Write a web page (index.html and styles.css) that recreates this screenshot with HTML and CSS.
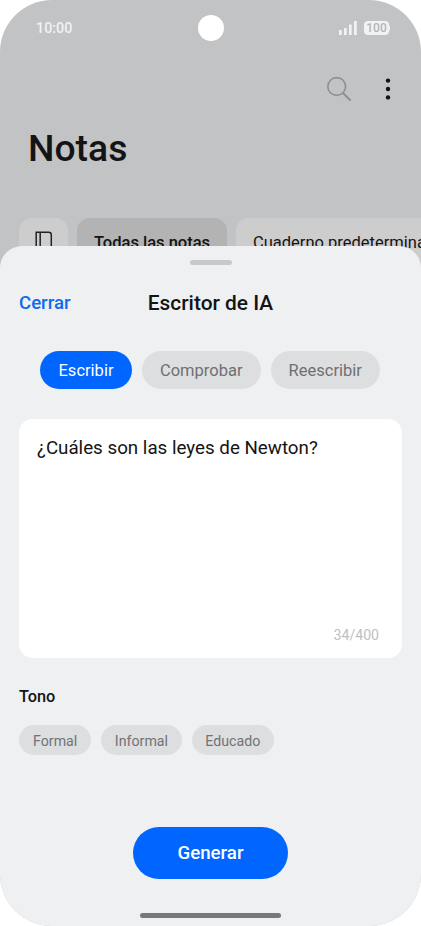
FILE: index.html
```html
<!DOCTYPE html>
<html lang="es">
<head>
<meta charset="utf-8">
<title>Notas</title>
<link rel="stylesheet" href="styles.css">
</head>
<body>
<main class="phone">
  <section class="notes">
    <header class="status">
      <span class="time">10:00</span>
      <span class="camera"></span>
      <span class="indicators">
        <svg class="signal" width="18" height="14" viewBox="0 0 18 14"><path d="M0 9h2.7v5H0zM5 7h2.7v7H5zM10 3.5h2.7V14H10zM15 0h2.7v14H15z"/></svg>
        <span class="battery">100</span>
      </span>
    </header>
    <div class="actions">
      <svg width="26" height="26" viewBox="0 0 26 26" fill="none" stroke="#8d8f90" stroke-linecap="round"><circle cx="10.7" cy="10.5" r="8.9" stroke-width="1.6"/><path d="M17.2 17.2L24 24" stroke-width="2"/></svg>
      <svg width="6" height="22" viewBox="0 0 6 22" fill="#111"><circle cx="3" cy="2.6" r="2.2"/><circle cx="3" cy="11" r="2.2"/><circle cx="3" cy="19.4" r="2.2"/></svg>
    </div>
    <h1 class="title">Notas</h1>
    <nav class="folders">
      <span class="folder folder-icon"><svg width="18" height="22" viewBox="0 0 18 22" fill="none" stroke="#222" stroke-width="1.5"><path d="M1.2 1.2h12.5a2.6 2.6 0 0 1 2.6 2.6V21H1.2zM5.2 1.2V21"/></svg></span>
      <span class="folder folder-active">Todas las notas</span>
      <span class="folder folder-default">Cuaderno predeterminado</span>
    </nav>
  </section>
  <section class="sheet">
    <span class="grabber"></span>
    <header class="sheet-head">
      <span class="close">Cerrar</span>
      <h2 class="sheet-title">Escritor de IA</h2>
    </header>
    <div class="modes">
      <span class="mode mode-write">Escribir</span>
      <span class="mode mode-check">Comprobar</span>
      <span class="mode mode-rewrite">Reescribir</span>
    </div>
    <div class="prompt">
      <p class="prompt-text">¿Cuáles son las leyes de Newton?</p>
      <span class="counter">34/400</span>
    </div>
    <h3 class="tone-title">Tono</h3>
    <div class="tones">
      <span class="tone tone-formal">Formal</span>
      <span class="tone tone-informal">Informal</span>
      <span class="tone tone-polite">Educado</span>
    </div>
    <div class="generate">Generar</div>
    <span class="home"></span>
  </section>
</main>
</body>
</html>
```

FILE: styles.css
```css
* { box-sizing: border-box; margin: 0; padding: 0; }
body { background: #fff; font-family: Roboto, sans-serif; color: #141414; overflow: hidden; }
.phone { width: 421px; height: 926px; border-radius: 52px; overflow: hidden; background: #c1c3c5; }
.notes { height: 270px; overflow: hidden; }
.status { height: 56px; padding: 0 31px 0 36px; display: grid; grid-template-columns: 1fr 26px 1fr; align-items: center; }
.time { font-size: 14.3px; font-weight: 500; color: #f1f2f2; }
.camera { width: 26px; height: 26px; border-radius: 50%; background: #fff; margin-left: -2px; }
.indicators { display: flex; justify-content: flex-end; align-items: center; gap: 6px; }
.signal { fill: #f1f2f2; margin-right: 1px; }
.battery { position: relative; width: 25px; height: 13.5px; margin-right: 1px; border-radius: 4px; background: #f1f2f2; color: #b3b5b7; font-size: 12px; line-height: 14px; font-weight: 500; text-align: center; }
.battery::after { content: ""; position: absolute; right: -1px; top: 4px; width: 2px; height: 6px; border-radius: 0 2px 2px 0; background: #f1f2f2; }
.actions { height: 44px; margin-top: 11px; padding-right: 30px; display: flex; justify-content: flex-end; align-items: center; gap: 33px; }
.title { font-size: 37.3px; font-weight: 500; line-height: 44px; margin: 15px 0 0 28px; }
.folders { display: flex; gap: 9px; margin: 48px 0 0 19px; width: 500px; }
.folder { height: 49px; border-radius: 13px; background: #cdcdcd; font-size: 16.5px; line-height: 49px; white-space: nowrap; text-align: center; }
.folder-icon { width: 49px; padding: 13px 0 0 0; line-height: 0; }
.folder-active { width: 150px; background: #b3b3b3; font-weight: 500; }
.folder-default { width: 250px; text-align: left; padding-left: 17px; }
.sheet { position: relative; height: 680px; margin-top: -24.4px; border-radius: 22px 22px 0 0; background: #eff0f2; padding: 14px 19px 0; display: flex; flex-direction: column; }
.grabber { width: 42px; height: 5px; border-radius: 3px; background: #c7c9cb; align-self: center; flex: none; }
.sheet-head { height: 32px; margin-top: 22.4px; display: grid; grid-template-columns: 1fr auto 1fr; align-items: center; }
.close { color: #0a6bf4; font-size: 18.6px; font-weight: 500; }
.sheet-title { font-size: 20.9px; font-weight: 500; }
.modes { display: flex; gap: 9.5px; margin: 32px 0 0 21px; }
.mode { height: 38px; line-height: 39px; border-radius: 19px; background: #dddee0; color: #6f7071; font-size: 16.5px; text-align: center; }
.mode-write { width: 92px; background: #0066ff; color: #fff; }
.mode-check { width: 119.5px; }
.mode-rewrite { width: 109.5px; }
.prompt { height: 239px; margin-top: 30px; border-radius: 14px; background: #fff; padding: 17px 23px 13px 18px; display: flex; flex-direction: column; justify-content: space-between; }
.prompt-text { font-size: 18.75px; line-height: 24px; white-space: nowrap; }
.counter { align-self: flex-end; color: #bfbfbf; font-size: 14.1px; line-height: 19px; }
.tone-title { font-size: 16.3px; font-weight: 500; line-height: 20px; margin-top: 29px; }
.tones { display: flex; gap: 9.3px; margin-top: 18px; }
.tone { height: 30px; line-height: 32px; border-radius: 15px; background: #dddee0; color: #727374; font-size: 14.2px; text-align: center; }
.tone-formal { width: 72.3px; }
.tone-informal { width: 81.7px; }
.tone-polite { width: 82.5px; }
.generate { align-self: center; width: 155px; height: 52px; line-height: 53px; margin-top: 72px; border-radius: 26px; background: #0066ff; color: #fff; font-size: 18.7px; font-weight: 500; text-align: center; }
.home { align-self: center; width: 141px; height: 5px; border-radius: 3px; background: #777979; margin-top: 34px; }
```
